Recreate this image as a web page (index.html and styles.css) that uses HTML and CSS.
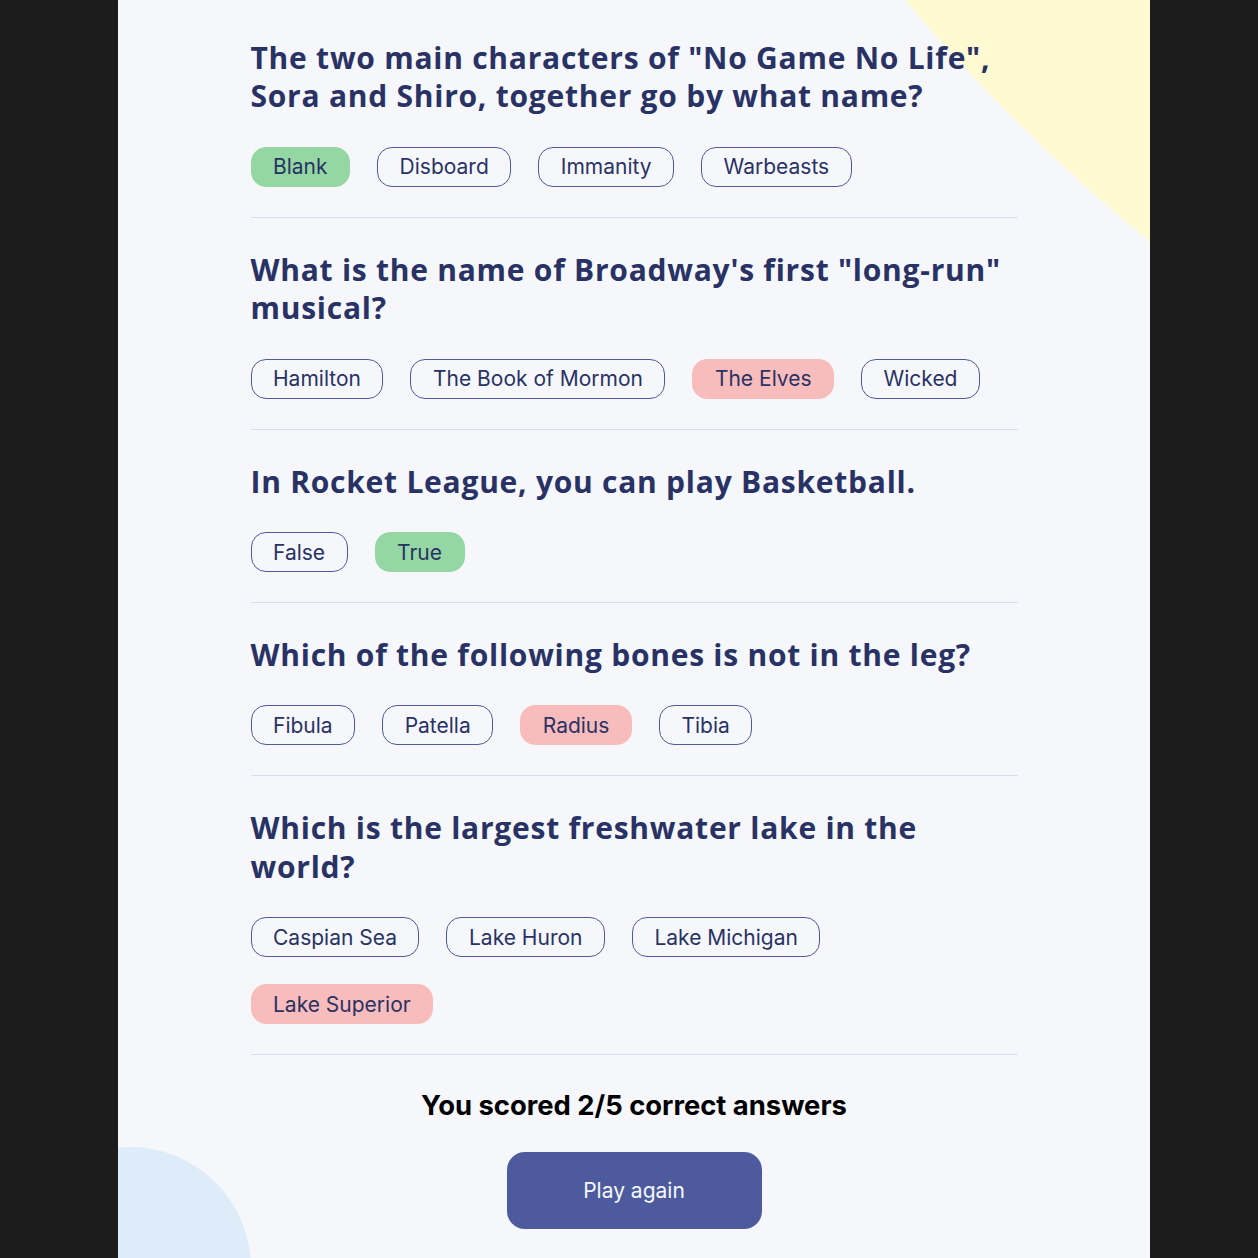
FILE: index.html
```html
<!DOCTYPE html>
<html lang="en">
<head>
<meta charset="utf-8">
<title>Quizzical</title>
<link rel="stylesheet" href="styles.css">
</head>
<body>
<main class="panel">
  <svg class="blob-yellow" width="245" height="242" viewBox="0 0 245 242" aria-hidden="true"><path d="M0,0 Q111,132 245,242 L245,0 Z" fill="#fffad1"/></svg>
  <div class="blob-blue"></div>
  <div class="quiz">
    <section class="question">
      <h2>The two main characters of "No Game No Life", Sora and Shiro, together go by what name?</h2>
      <div class="answers">
        <span class="answer correct">Blank</span>
        <span class="answer">Disboard</span>
        <span class="answer">Immanity</span>
        <span class="answer">Warbeasts</span>
      </div>
    </section>
    <section class="question">
      <h2>What is the name of Broadway's first "long-run" musical?</h2>
      <div class="answers">
        <span class="answer">Hamilton</span>
        <span class="answer">The Book of Mormon</span>
        <span class="answer wrong">The Elves</span>
        <span class="answer">Wicked</span>
      </div>
    </section>
    <section class="question">
      <h2>In Rocket League, you can play Basketball.</h2>
      <div class="answers">
        <span class="answer">False</span>
        <span class="answer correct">True</span>
      </div>
    </section>
    <section class="question">
      <h2>Which of the following bones is not in the leg?</h2>
      <div class="answers">
        <span class="answer">Fibula</span>
        <span class="answer">Patella</span>
        <span class="answer wrong">Radius</span>
        <span class="answer">Tibia</span>
      </div>
    </section>
    <section class="question">
      <h2>Which is the largest freshwater lake in the world?</h2>
      <div class="answers">
        <span class="answer">Caspian Sea</span>
        <span class="answer">Lake Huron</span>
        <span class="answer">Lake Michigan</span>
        <span class="answer wrong">Lake Superior</span>
      </div>
    </section>
    <div class="result">
      <p class="score">You scored 2/5 correct answers</p>
      <button class="play">Play again</button>
    </div>
  </div>
</main>
</body>
</html>
```

FILE: styles.css
```css
html, body {
  margin: 0;
  padding: 0;
}
body {
  background: #1c1c1c;
  font-family: "Inter", "Liberation Sans", sans-serif;
}
.panel {
  position: relative;
  width: 1032px;
  height: 1258px;
  margin-left: 118px;
  background: #f5f7fb;
  overflow: hidden;
}
.blob-yellow {
  position: absolute;
  top: 0;
  right: 0;
}
.blob-blue {
  position: absolute;
  left: -109px;
  top: 1147px;
  width: 242px;
  height: 242px;
  border-radius: 50%;
  background: #deebf8;
}
.quiz {
  position: relative;
  width: 767px;
  margin: 0 auto;
  padding-top: 6px;
}
.question {
  padding: 33px 0 30px;
  border-bottom: 1px solid #dbdef0;
}
.question h2 {
  margin: 0 0 31px;
  font-family: "Open Sans", sans-serif;
  font-weight: 700;
  font-size: 30px;
  line-height: 38.4px;
  letter-spacing: 0.75px;
  color: #293264;
}
.answers {
  display: flex;
  flex-wrap: wrap;
  gap: 27px;
}
.answer {
  box-sizing: border-box;
  height: 40px;
  display: inline-flex;
  align-items: center;
  padding: 0 21.5px;
  border: 1.5px solid #4d5b9e;
  border-radius: 15px;
  font-size: 21px;
  color: #293264;
}
.answer.correct {
  background: #94d7a2;
  border-color: #94d7a2;
}
.answer.wrong {
  background: #f8bcbc;
  border-color: #f8bcbc;
}
.result {
  display: flex;
  flex-direction: column;
  align-items: center;
}
.score {
  margin: 35px 0 31px;
  font-size: 27.4px;
  line-height: 31px;
  font-weight: 700;
  color: #000;
}
.play {
  width: 255px;
  height: 77px;
  border: none;
  border-radius: 18px;
  background: #4d5b9e;
  color: #f5f7fb;
  font-family: "Inter", sans-serif;
  font-size: 21px;
}
```
